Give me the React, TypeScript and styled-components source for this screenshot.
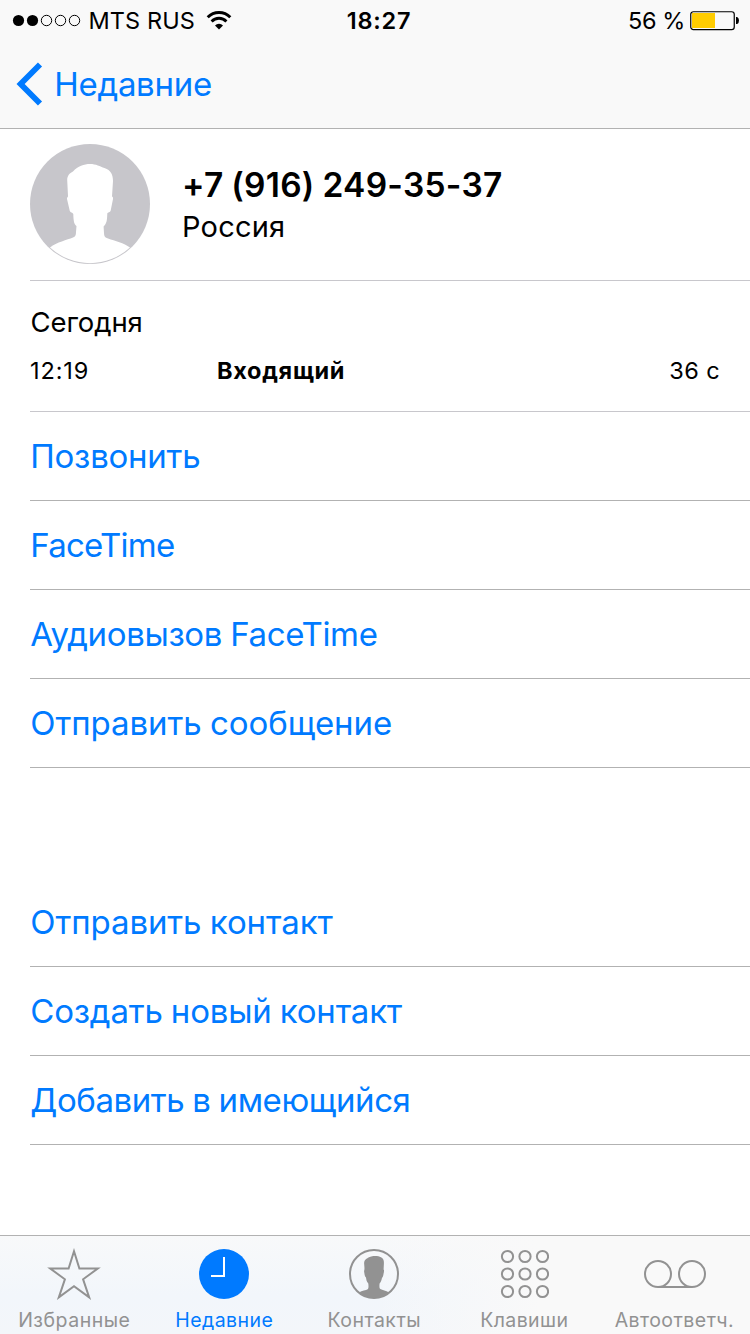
import React from "react";
import styled, { createGlobalStyle } from "styled-components";

const BLUE = "#007aff";
const GRAY = "#929292";

const GlobalStyle = createGlobalStyle`
  * { box-sizing: border-box; }
  body { margin: 0; background: #fff; }
`;

const Screen = styled.div`
  width: 750px;
  height: 1334px;
  display: flex;
  flex-direction: column;
  background: #fff;
  color: #000;
  font-family: Inter, "Liberation Sans", sans-serif;
  white-space: nowrap;
  overflow: hidden;
`;

const Header = styled.header`
  height: 129px;
  background: #f9f9f9;
  border-bottom: 1px solid #b2b2b2;
`;

const StatusBar = styled.div`
  height: 40px;
  display: grid;
  grid-template-columns: 1fr auto 1fr;
  align-items: center;
  padding: 0 10px 0 12px;
  font-size: 23.5px;
  line-height: 40px;
`;

const Carrier = styled.div`
  display: flex;
  align-items: center;
`;

const CarrierName = styled.span`
  margin: 1px 11px 0 6.5px;
  letter-spacing: 0.1px;
`;

const Clock = styled.span`
  font-weight: 600;
  letter-spacing: 0.8px;
  margin-top: 1px;
  margin-left: 6px;
`;

const Power = styled.div`
  display: flex;
  align-items: center;
  justify-content: flex-end;
`;

const Percent = styled.span`
  margin: 1px 5px 0 0;
  letter-spacing: -0.4px;
`;

const BackButton = styled.button`
  display: flex;
  align-items: center;
  height: 88px;
  padding: 0 0 0 16px;
  border: 0;
  background: none;
  color: ${BLUE};
  font: 400 33px/88px Inter, "Liberation Sans", sans-serif;
`;

const BackLabel = styled.span`
  margin-left: 10.3px;
  letter-spacing: -0.3px;
`;

const Content = styled.main`
  flex: 1;
  padding-left: 30px;
`;

const Profile = styled.section`
  height: 152px;
  display: flex;
  border-bottom: 1px solid #c8c7cc;
  padding-top: 15px;
`;

const ProfileText = styled.div`
  padding: 20px 0 0 32px;
`;

const Phone = styled.h1`
  margin: 0;
  font-size: 33.5px;
  line-height: 42px;
  font-weight: 600;
  letter-spacing: 0.25px;
  word-spacing: -0.8px;
`;

const Country = styled.div`
  font-size: 29px;
  line-height: 41px;
  letter-spacing: 0.2px;
`;

const CallLog = styled.section`
  height: 131px;
  padding: 23px 30px 0 0;
  border-bottom: 1px solid #c8c7cc;
`;

const Day = styled.div`
  padding-left: 0.5px;
  font-size: 27.5px;
  line-height: 36px;
  letter-spacing: -0.1px;
`;

const Call = styled.div`
  display: grid;
  grid-template-columns: 187px 1fr auto;
  margin-top: 13px;
  font-size: 23.5px;
  line-height: 36px;
  letter-spacing: 0.7px;
`;

const CallTime = styled.span`
  letter-spacing: 0.9px;
`;

const CallKind = styled.span`
  font-weight: 700;
`;

const CallDuration = styled.span`
  letter-spacing: 0.4px;
`;

const ActionList = styled.ul<{ $gap?: number }>`
  list-style: none;
  margin: ${(p) => p.$gap ?? 0}px 0 0;
  padding: 0;
`;

const Action = styled.li<{ $tracking: number }>`
  height: 89px;
  padding-left: 0.3px;
  border-bottom: 1px solid #b2b2b2;
  color: ${BLUE};
  font-size: 33px;
  line-height: 88px;
  letter-spacing: ${(p) => p.$tracking}px;
  word-spacing: -0.8px;
`;

const TabBar = styled.nav`
  height: 99px;
  display: grid;
  grid-template-columns: repeat(5, 150px);
  border-top: 1px solid #b2b2b2;
  background: linear-gradient(90deg, rgba(249, 249, 249, 0) 50%, #f9f9f9 72%),
    linear-gradient(180deg, #f8f9fa 0%, #f2f6fb 60%, #f3f6fa 100%);
`;

const Tab = styled.div<{ $active?: boolean; $tracking: number }>`
  display: flex;
  flex-direction: column;
  align-items: center;
  padding: 12px 2px 0 0;
  color: ${(p) => (p.$active ? BLUE : GRAY)};
  font-size: 19.5px;
  line-height: 24px;
  letter-spacing: ${(p) => p.$tracking}px;
`;

const TabLabel = styled.span`
  padding-left: 0.6px;
`;

const TabIcon = styled.svg`
  display: block;
  flex: none;
  margin-bottom: 8px;
`;

const Signal = () => (
  <svg width="70" height="14" viewBox="0 0 70 14">
    {[0, 1, 2, 3, 4].map((i) => (
      <circle
        key={i}
        cx={6.5 + i * 14}
        cy="6.5"
        r={i < 2 ? 5.6 : 5.2}
        fill={i < 2 ? "#000" : "none"}
        stroke={i < 2 ? "none" : "#000"}
      />
    ))}
  </svg>
);

const Wifi = () => (
  <svg width="26" height="20" viewBox="0 0 26 20" fill="none" stroke="#000" strokeWidth="2.9">
    <path d="M1.7 6.3a15.8 15.8 0 0 1 22.6 0" />
    <path d="M5.6 10.4a10.4 10.4 0 0 1 14.8 0" />
    <path d="M9 14.4a5.6 5.6 0 0 1 8 0L13 18.4z" fill="#000" stroke="none" />
  </svg>
);

const Battery = () => (
  <svg width="50" height="20" viewBox="0 0 50 20">
    <rect x="0.75" y="0.75" width="43.5" height="17.8" rx="2.6" fill="none" stroke="#000" strokeWidth="1.2" />
    <rect x="2" y="2" width="23" height="15" fill="#fc0" />
    <path d="M46 6h1.2q1.8 1 1.8 3.5T47.2 13H46z" />
  </svg>
);

const Avatar = () => (
  <svg width="120" height="120" viewBox="0 0 120 120">
    <circle cx="60" cy="60" r="60" fill="#c7c6cb" />
    <path
      d="M20 103.5C27 98 37 96 43 93.5C45.5 92.5 46 91 46 88L46.5 82C44 80 43.5 77 43.3 70C42.5 68 40.5 68.8 39.8 67L37 55C36.8 53 38.2 53.5 38 52L37.2 36C37.2 32 39.5 29 43 27.5C48 22 54 20 60 20C66 20 70 22.5 74.5 24C81 26 83 31 83 37L82 52.5C83 53 83.2 54 83 55L80.7 66.5C80 68.8 78 68 77.3 69.5C77 76 77 79 73.6 82.5L74 89C74.2 92.5 75 93.5 78 94.5C85 97 94 99 100 103.5A59 59 0 0 1 20 103.5Z"
      fill="#fff"
    />
  </svg>
);

const StarIcon = () => (
  <TabIcon width="54" height="52" viewBox="0 0 54 52" fill="none" stroke="currentColor" strokeWidth="2">
    <path d="M27 3.3L32.4 20.5H50.8L36.1 31.3L42.2 49.4L27 38.2L11.8 49.4L17.9 31.3L3.2 20.5H21.6Z" />
  </TabIcon>
);

const ClockIcon = () => (
  <TabIcon width="50" height="52" viewBox="0 0 50 52">
    <circle cx="25" cy="26" r="25" fill="currentColor" />
    <path d="M25 9V28H12" fill="none" stroke="#fff" strokeWidth="2" />
  </TabIcon>
);

const ContactIcon = () => (
  <TabIcon width="50" height="52" viewBox="0 0 50 52">
    <circle cx="25" cy="26" r="24" fill="none" stroke="currentColor" strokeWidth="2" />
    <path
      d="M10 44.5C13 42.5 17 42.3 18.7 41.3C19.7 40.5 19.6 38 19.3 35.5C17.5 33.5 17.4 32 17 29.5C15.6 28.5 15.5 26 15.1 23.5C14.9 22 15.7 22.5 15.4 19L15.1 15C15.5 11.5 17.5 11 19 9.8C22.5 7.6 29 7.6 32 9.3C34.5 10.5 35 12.5 34.9 15.5L34.6 21.5C35.4 22.2 35 24 34.5 26C34.2 28 34 29 33 29.8C32.7 32 32 34 30.6 35.5C30.3 38 30.3 40.3 31.3 41.1C33.5 42.3 37 42.5 40 44.5A24 24 0 0 1 10 44.5Z"
      fill="currentColor"
    />
  </TabIcon>
);

const KeypadIcon = () => (
  <TabIcon width="50" height="52" viewBox="0 0 50 52" fill="none" stroke="currentColor" strokeWidth="2">
    {[8.5, 26, 43.5].map((y) =>
      [8.5, 26, 43.5].map((x) => <circle key={`${x}-${y}`} cx={x} cy={y} r="5.6" />)
    )}
  </TabIcon>
);

const VoicemailIcon = () => (
  <TabIcon width="66" height="52" viewBox="0 0 66 52" fill="none" stroke="currentColor" strokeWidth="2">
    <circle cx="17" cy="26" r="13" />
    <circle cx="51" cy="26" r="13" />
    <path d="M17 39H51" />
  </TabIcon>
);

export default function App() {
  return (
    <>
      <GlobalStyle />
      <Screen>
        <Header>
          <StatusBar>
            <Carrier>
              <Signal />
              <CarrierName>MTS RUS</CarrierName>
              <Wifi />
            </Carrier>
            <Clock>18:27</Clock>
            <Power>
              <Percent>56 %</Percent>
              <Battery />
            </Power>
          </StatusBar>
          <BackButton>
            <svg width="28" height="44" viewBox="0 0 28 44" fill="none" stroke={BLUE} strokeWidth="5.8">
              <path d="M24 2.5L4.6 22L24 41.5" />
            </svg>
            <BackLabel>Недавние</BackLabel>
          </BackButton>
        </Header>
        <Content>
          <Profile>
            <Avatar />
            <ProfileText>
              <Phone>+7 (916) 249-35-37</Phone>
              <Country>Россия</Country>
            </ProfileText>
          </Profile>
          <CallLog>
            <Day>Сегодня</Day>
            <Call>
              <CallTime>12:19</CallTime>
              <CallKind>Входящий</CallKind>
              <CallDuration>36 с</CallDuration>
            </Call>
          </CallLog>
          <ActionList>
            <Action $tracking={-0.25}>Позвонить</Action>
            <Action $tracking={-0.75}>FaceTime</Action>
            <Action $tracking={-0.35}>Аудиовызов FaceTime</Action>
            <Action $tracking={-0.08}>Отправить сообщение</Action>
          </ActionList>
          <ActionList $gap={110}>
            <Action $tracking={-0.1}>Отправить контакт</Action>
            <Action $tracking={-0.21}>Создать новый контакт</Action>
            <Action $tracking={-0.43}>Добавить в имеющийся</Action>
          </ActionList>
        </Content>
        <TabBar>
          <Tab $tracking={0.5}>
            <StarIcon />
            <TabLabel>Избранные</TabLabel>
          </Tab>
          <Tab $tracking={0.45} $active>
            <ClockIcon />
            <TabLabel>Недавние</TabLabel>
          </Tab>
          <Tab $tracking={0.45}>
            <ContactIcon />
            <TabLabel>Контакты</TabLabel>
          </Tab>
          <Tab $tracking={0.4}>
            <KeypadIcon />
            <TabLabel>Клавиши</TabLabel>
          </Tab>
          <Tab $tracking={0.45}>
            <VoicemailIcon />
            <TabLabel>Автоответч.</TabLabel>
          </Tab>
        </TabBar>
      </Screen>
    </>
  );
}
